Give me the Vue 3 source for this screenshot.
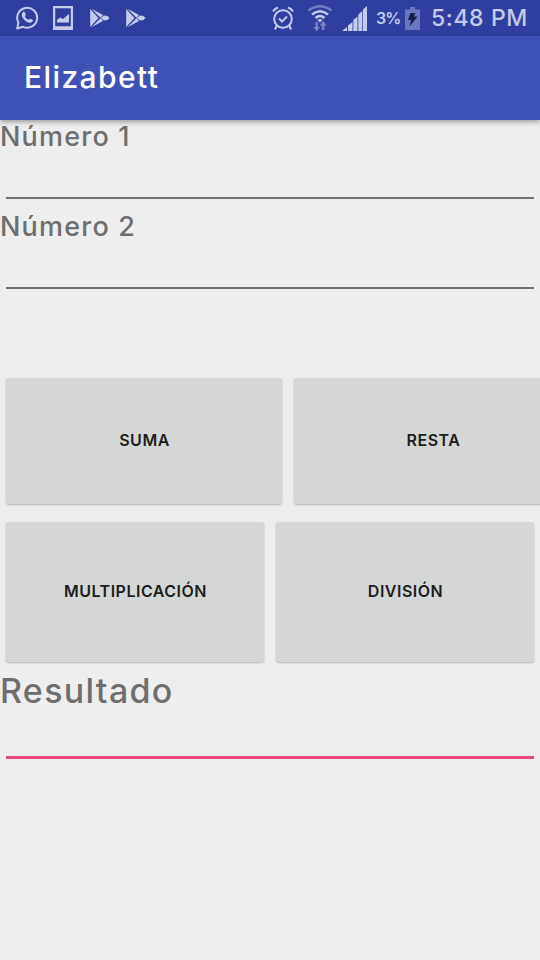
<template>
  <div class="screen">
    <div class="status-bar">
      <div class="notifications">
        <svg class="whatsapp" width="24" height="24" viewBox="0 0 24 24">
          <path d="M1.200 22.500l1.200-6A10 10 0 1 1 7 20.800z" fill="none" stroke="currentColor" stroke-width="2" stroke-linejoin="round" />
          <path d="M7.200 6c.5-.4 1.300-.3 1.600.3l.9 2.200c.2.5-.8 1.300-.8 1.700.8 1.700 2.100 2.900 3.800 3.600.5-.1 1.100-1.300 1.700-1.100l2.200 1c.6.300.3 1.600-.2 2.100-1.200 1.200-3.200 1.200-4.900.4-2.600-1.100-4.600-3.200-5.400-5.600-.6-1.600-.2-3.700 1.100-4.600z" fill="currentColor" />
        </svg>
        <svg class="picture" width="20" height="24" viewBox="0 0 20 24">
          <path d="M0 0h20v24H0zM2.200 2.200v18h15.600v-18z" fill="currentColor" fill-rule="evenodd" />
          <path d="M4 16.500V14l3-2.500 3 1.500 6-5v8.500z" fill="currentColor" />
        </svg>
        <svg v-for="n in 2" :key="n" class="play" width="20" height="20" viewBox="0 0 20 20">
          <path d="M.2 1v18L8.500 10z" fill="currentColor" />
          <path d="M1.500.8L13 7 10.500 9.700zM1.500 19.200L13 13l-2.500-2.700z" fill="currentColor" />
          <path d="M10.800 10l3.200-2.600 3.500.6L19.500 10 17.500 12l-3.500.6z" fill="currentColor" />
        </svg>
      </div>
      <div class="system">
        <svg class="alarm" width="22" height="24" viewBox="0 0 22 24">
          <g fill="none" stroke="currentColor" stroke-width="2">
            <circle cx="11" cy="13" r="8.800" />
            <path d="M7 12.500l3 3 5-5M1 5.500q1.500-2.700 5-4M21 5.500q-1.500-2.700-5-4M4.500 20l-1.500 3.500M17.500 20l1.500 3.500" />
          </g>
        </svg>
        <svg class="wifi" width="26" height="28" viewBox="0 0 26 28">
          <g fill="none" stroke="currentColor" stroke-width="2.500">
            <path d="M1.500 6.500q11.500-8.500 23 0" opacity=".45" />
            <path d="M5 10.500q8-6.500 16 0M8.500 14q4.500-4 9 0" />
          </g>
          <path d="M10.500 16q2.500-1.800 5 0L13 18.500z" fill="currentColor" />
          <path d="M8.500 18h2.400v5h2.200l-3.400 4.200L6.300 23h2.200zM14.800 26v-4.500h-2.200l3.600-4.500 3.500 4.500h-2.300V26z" fill="currentColor" opacity=".5" />
        </svg>
        <svg class="signal" width="25" height="25" viewBox="0 0 25 25">
          <path d="M0 25l5-4v4zM6 25v-5.500L10.500 16v9zM11.300 25V14L15.500 10.500V25zM16.300 8.500L20.300 5v20h-4zM21 3.500L25 0v25h-4z" fill="currentColor" />
        </svg>
        <span class="percent">3%</span>
        <svg class="battery" width="15" height="23" viewBox="0 0 15 23">
          <path d="M0 2.500h5V0h5v2.500h5V23H0z" fill="#6b76c0" />
          <path d="M5.500 6h5L8.700 9.500h3.800L4.500 19.500l1.700-6.500H3z" fill="#152048" />
        </svg>
        <span class="clock">5:48 PM</span>
      </div>
    </div>

    <div class="app-bar">
      <h1 class="title">Elizabett</h1>
    </div>

    <main>
      <div class="field">
        <label class="label" for="numero1">Número 1</label>
        <input id="numero1" class="entry" type="text" v-model="state.numero1" />
      </div>
      <div class="field">
        <label class="label" for="numero2">Número 2</label>
        <input id="numero2" class="entry" type="text" v-model="state.numero2" />
      </div>

      <div class="row first">
        <button class="btn" @click="calcular('suma')">SUMA</button>
        <button class="btn" @click="calcular('resta')">RESTA</button>
      </div>
      <div class="row second">
        <button class="btn" @click="calcular('multiplicacion')">MULTIPLICACIÓN</button>
        <button class="btn" @click="calcular('division')">DIVISIÓN</button>
      </div>

      <div class="field result">
        <label class="label" for="resultado">Resultado</label>
        <input id="resultado" class="entry" type="text" v-model="state.resultado" />
      </div>
    </main>
  </div>
</template>

<script setup>
import { reactive } from "vue";

const state = reactive({
  numero1: "",
  numero2: "",
  resultado: "",
});

const calcular = (operacion) => {
  const a = Number(state.numero1);
  const b = Number(state.numero2);
  if (operacion === "suma") state.resultado = a + b;
  if (operacion === "resta") state.resultado = a - b;
  if (operacion === "multiplicacion") state.resultado = a * b;
  if (operacion === "division") state.resultado = a / b;
};
</script>

<style>
body {
  margin: 0;
  background: #eeeeee;
}
</style>

<style scoped>
* {
  box-sizing: border-box;
}

.screen {
  height: 960px;
  overflow: hidden;
  background: #eeeeee;
  font-family: Inter, Roboto, sans-serif;
}

.status-bar {
  display: flex;
  justify-content: space-between;
  height: 36px;
  padding: 0 13px 0 16px;
  background: #303f9f;
  color: #c5cbea;
}

.notifications,
.system {
  display: flex;
  align-items: center;
}

.picture {
  margin-left: 13px;
}

.play {
  margin-left: 17px;
}

.play + .play {
  margin-left: 16px;
}

.wifi {
  margin-left: 13px;
}

.signal {
  margin-left: 9px;
}

.percent {
  width: 25px;
  margin-left: 9px;
  font-size: 16px;
  font-weight: 600;
  letter-spacing: -1px;
  white-space: nowrap;
}

.battery {
  margin-left: 4px;
}

.clock {
  width: 96px;
  margin-left: 11px;
  font-size: 23px;
  font-weight: 500;
  letter-spacing: 0.6px;
  white-space: nowrap;
}

.app-bar {
  position: relative;
  display: flex;
  align-items: center;
  height: 84px;
  padding: 0 24px 2px;
  background: #3f51b5;
  box-shadow: 0 2px 5px rgba(0, 0, 0, 0.35);
}

.title {
  margin: 0;
  color: #fff;
  font-size: 30px;
  font-weight: 500;
  letter-spacing: 1.4px;
}

.field {
  display: flex;
  flex-direction: column;
  height: 90px;
}

.label {
  height: 34px;
  color: #6e6e6e;
  font-size: 27px;
  font-weight: 500;
  line-height: 34px;
  letter-spacing: 1.2px;
}

.entry {
  height: 45px;
  margin: 0 6px;
  padding: 0 2px;
  border: none;
  border-bottom: 2px solid #6f6f6f;
  outline: none;
  background: none;
  color: #212121;
  font: inherit;
  font-size: 24px;
}

.row {
  display: flex;
  gap: 12px;
  padding: 0 6px;
}

.first {
  margin-top: 78px;
}

.first .btn {
  flex: none;
  width: 276px;
  height: 126px;
}

.first .btn + .btn {
  width: 278px;
}

.second {
  margin-top: 18px;
}

.second .btn {
  flex: 1;
  height: 140px;
}

.btn {
  padding: 0 0 2px 1px;
  border: none;
  border-radius: 3px;
  background: #d5d7d6;
  box-shadow: 0 1px 2px rgba(0, 0, 0, 0.25);
  color: #1c1d1d;
  font-family: inherit;
  font-size: 16px;
  font-weight: 600;
  letter-spacing: 0.5px;
}

.result {
  height: 98px;
}

.result .label {
  height: 50px;
  padding-top: 8px;
  font-size: 34px;
  line-height: 42px;
  letter-spacing: 1.3px;
}

.result .entry {
  height: 47px;
  border-bottom: 3px solid #e84a80;
}
</style>
